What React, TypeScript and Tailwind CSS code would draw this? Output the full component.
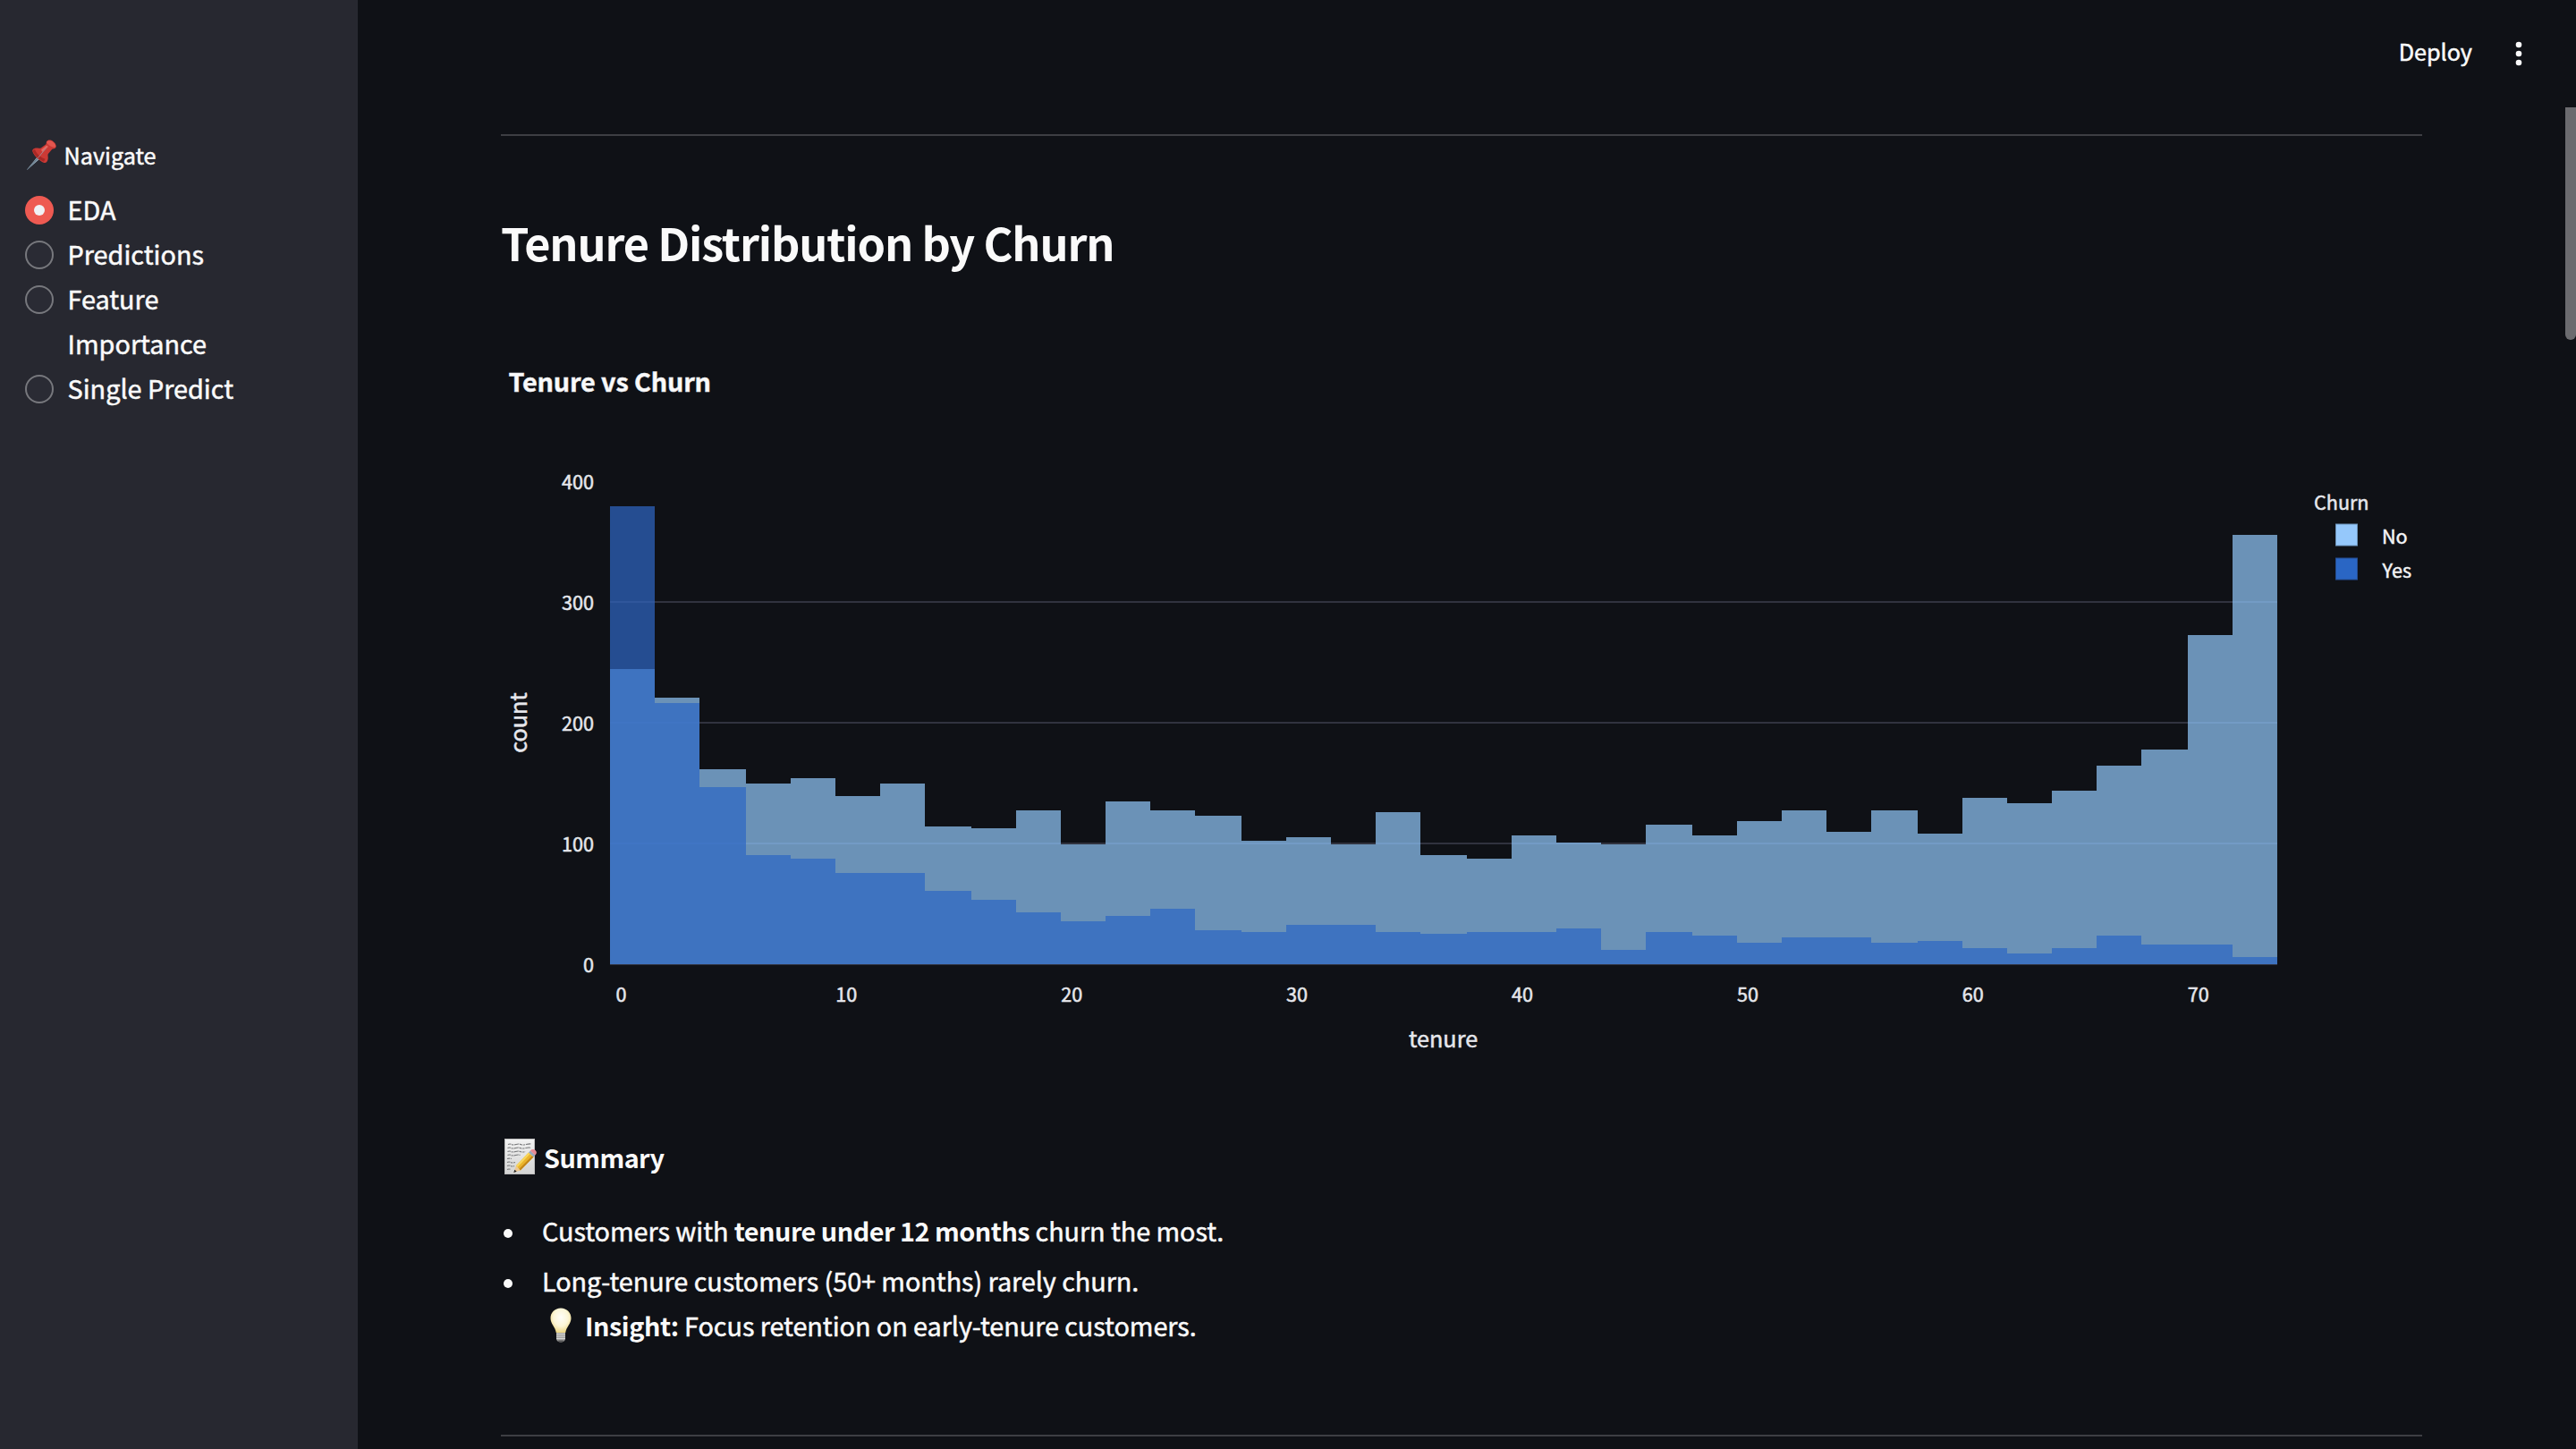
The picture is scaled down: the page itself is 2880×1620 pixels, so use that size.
import React from "react";

const FONT = "font-['Noto_Sans_CJK_SC','Noto_Sans',sans-serif] [-webkit-text-stroke:0.5px_currentColor]";

/* Histogram geometry: pixel tops of every two-month bin, baseline at y = 1078. */
const BASE = 1078;
const LEFT = 682;
const BIN = 25.19;
const NO_TOPS = [
  748, 780, 860, 876, 870, 890, 876, 924, 926, 906, 944, 896, 906, 912, 940, 936, 944, 908, 956,
  960, 934, 942, 944, 922, 934, 918, 906, 930, 906, 932, 892, 898, 884, 856, 838, 710, 598,
];
const YES_TOPS = [
  566, 786, 880, 956, 960, 976, 976, 996, 1006, 1020, 1030, 1024, 1016, 1040, 1042, 1034, 1034,
  1042, 1044, 1042, 1042, 1038, 1062, 1042, 1046, 1054, 1048, 1048, 1054, 1052, 1060, 1066, 1060,
  1046, 1056, 1056, 1070,
];
const edge = (i: number) => LEFT + Math.round(i * BIN) * 2;

function area(tops: number[]) {
  let d = `M${LEFT} ${BASE}`;
  tops.forEach((t, i) => {
    d += `V${t}H${edge(i + 1)}`;
  });
  return d + `V${BASE}Z`;
}

function Chart() {
  return (
    <svg
      className="mt-[75px] block h-[840px] w-[2148px] [&_text]:stroke-[#e6e7ec] [&_text]:[stroke-width:0.5px]"
      viewBox="560 380 2148 840"
      fill="#e6e7ec"
    >
      <defs>
        <clipPath id="no-bars">
          <path d={area(NO_TOPS)} />
        </clipPath>
      </defs>
      <text x="568.500" y="438" fontSize="28.8" fontWeight="700" fill="#fafafa" letterSpacing="-0.15">
        Tenure vs Churn
      </text>
      {[672, 807, 942].map((y) => (
        <rect key={y} x={LEFT} y={y} width="1864" height="2" fill="#31333f" />
      ))}
      <path d={area(YES_TOPS)} fill="#254d91" />
      <rect x={LEFT} y="672" width="50" height="2" fill="#2f569b" />
      <path d={area(NO_TOPS)} fill="#6b92b7" />
      <g clipPath="url(#no-bars)" fill="#739bc5">
        <rect x={LEFT} y="672" width="1864" height="2" />
        <rect x={LEFT} y="807" width="1864" height="2" />
        <rect x={LEFT} y="942" width="1864" height="2" />
      </g>
      <g clipPath="url(#no-bars)">
        <path d={area(YES_TOPS)} fill="#3e73c0" />
      </g>
      <rect x={LEFT} y="807" width="100" height="2" fill="#4075c4" />
      <rect x={LEFT} y="942" width="152" height="2" fill="#4075c4" />
      <rect x={LEFT} y="1078" width="1864" height="1" fill="#31333f" />

      <g fontSize="21.6" textAnchor="end">
        {[400, 300, 200, 100, 0].map((v) => (
          <text key={v} x="664" y={1087 - v * 1.35}>
            {v}
          </text>
        ))}
      </g>
      <g fontSize="21.6" textAnchor="middle">
        {[0, 10, 20, 30, 40, 50, 60, 70].map((v) => (
          <text key={v} x={694.4 + v * 25.19} y="1120">
            {v}
          </text>
        ))}
      </g>
      <text x="1613.5" y="1171" fontSize="25.2" textAnchor="middle">
        tenure
      </text>
      <text transform="translate(588.500 808) rotate(-90)" fontSize="25.2" textAnchor="middle">
        count
      </text>

      <text x="2587" y="570" fontSize="21.6">
        Churn
      </text>
      <rect x="2611.5" y="586" width="24" height="24" fill="#95c8fb" stroke="#6c93ba" />
      <rect x="2611.5" y="624" width="24" height="24" fill="#2a66c4" stroke="#254d91" />
      <g fontSize="21.6" fill="#fafafa">
        <text x="2663" y="608">No</text>
        <text x="2663.500" y="646">Yes</text>
      </g>
    </svg>
  );
}

function Pin() {
  return (
    <svg className="h-[36px] w-[38px] shrink-0" viewBox="0 0 38 36">
      <path d="M2.2 34.4 16 17.5l3 2.8L2.6 34.8z" fill="#9fb6c6" />
      <path d="M2.2 34.4 16.5 18.4l1.2 1L2.6 34.8z" fill="#5f7382" />
      <path
        d="M8.3 14.2c-.6-2.4 2.3-4.3 6-3.7 1.300.2 2.300.4 3.400 0L23.400 6.200c.5-.8.2-1.900.7-2.900 1.300-2.300 4.600-2.200 7.200-.3 3 2.200 4.500 5.700 2.600 7.500-1 .9-2.500.6-3.600 1.200l-4.600 5.600c-.5 1.300.2 3.200 0 5-.3 3.600-2.500 5.400-4.500 4.600C17 25.400 9.500 19 8.300 14.200z"
        fill="#cc3a35"
      />
      <path d="M24 4c1.500-2.500 4.600-2.200 7.200-.3 2.400 1.800 3.600 4.200 2.800 5.800-3 .6-8.500-2-10-5.500z" fill="#e2564f" />
      <path d="M8.600 13.500c1.500 5 8 10.700 12.400 12.200l1.500-3C18 21.500 12.500 17 11 12z" fill="#a82825" />
      <path d="M18 12.500 24 7.500l2 1.500-6.500 6z" fill="#e8685f" />
      <path d="M14.500 21.500 23.500 10.500" stroke="#9b8d9a" strokeWidth=".9" />
    </svg>
  );
}

function Memo() {
  return (
    <svg className="h-[42px] w-[40px] shrink-0" viewBox="0 0 40 42">
      <defs>
        <linearGradient id="paper" x1="0" y1="0" x2="0" y2="1">
          <stop offset="0" stopColor="#f2f2f2" />
          <stop offset="1" stopColor="#d4d4d3" />
        </linearGradient>
      </defs>
      <rect x=".5" y=".5" width="33" height="39" fill="url(#paper)" stroke="#bdbdbd" />
      <g stroke="#77787a" strokeWidth="1.200" strokeDasharray="3.500 .8 2 .7 5 .9" fill="none">
        <path d="M4 6.500q2-1 4 0t5 0 5 0 6 0 6-.5M3.500 10.500q2-1 4 0t5 0 5 0 6 0 6 0M3.500 14.500q2-1 4 0t5 0 5 0 6 0M3.500 18.500q2-1 4 0t5 0 5 0M3 22.500q2-.6 5 0M3 26.500q2-1 4 0t5 0M3 30.500q2-1 4 0t4 0M3 34.500q2-1 4 0" />
      </g>
      <path d="M10.500 37.800 13 30.200l4.800 5.200z" fill="#ecc894" />
      <path d="M10.300 38 11.300 34.800l2.400 2z" fill="#222" />
      <path d="M13 30.200 27 15.500l5.500 5L17.800 35.400z" fill="#eab42c" />
      <path d="M13 30.200 27 15.500l1.700 1.500-14.200 14.900z" fill="#f8d65b" />
      <path d="M16.500 33.800 31 19.200l1.500 1.300L17.800 35.400z" fill="#c2861a" />
      <path d="m27 15.500 1.900-2 5.500 4.900-1.900 2.100z" fill="#9aa9ba" />
      <path d="M28.900 13.500c2-2 4.300-1.800 5.900-.3 1.500 1.400 1.600 3.300-.4 5.200z" fill="#e88a92" />
    </svg>
  );
}

function Bulb() {
  return (
    <svg className="h-[40px] w-[24px] shrink-0" viewBox="0 0 24 40">
      <defs>
        <radialGradient id="glow" cx=".5" cy=".38" r=".6">
          <stop offset="0" stopColor="#fffef8" />
          <stop offset=".6" stopColor="#fcf6d6" />
          <stop offset="1" stopColor="#eed98a" />
        </radialGradient>
      </defs>
      <path
        d="M12 .5C5.300.5.500 5.500.500 11.700c0 6.600 5.400 9.500 6.300 16.300h10.400c.9-6.800 6.300-9.700 6.300-16.300C23.500 5.500 18.700.5 12 .5z"
        fill="url(#glow)"
      />
      <path d="M7 28h10v6.500c0 2.500-2.500 4-5 4s-5-1.500-5-4z" fill="#a5a5a3" />
      <path d="M7 29.500h10M7 32h10M7 34.500h10" stroke="#d5d5d3" strokeWidth="1" />
      <path d="M8.500 36.500h7c-.8 1.500-2 2-3.500 2s-2.800-.5-3.500-2z" fill="#555" />
    </svg>
  );
}

function Radio({ label, on }: { label: React.ReactNode; on?: boolean }) {
  return (
    <div className="flex items-start gap-[15.5px]">
      {on ? (
        <span className="mt-[10px] flex size-8 shrink-0 items-center justify-center rounded-full bg-[#ee5a52]">
          <span className="size-3 rounded-full bg-[#f0f2f6]" />
        </span>
      ) : (
        <span className="mt-[10px] size-8 shrink-0 rounded-full border-2 border-[#77787d] bg-[#2a2b34]" />
      )}
      <span className="text-[28.8px] leading-[50px]">{label}</span>
    </div>
  );
}

export default function App() {
  return (
    <div className={`flex h-[1620px] w-[2880px] overflow-hidden bg-[#0f1116] text-[#fafafa] ${FONT}`}>
      <aside className="h-full w-[400px] shrink-0 bg-[#272830] pt-[149px] pl-7">
        <div className="flex items-center">
          <Pin />
          <span className="ml-[5.5px] text-[25.2px] leading-[48px]">Navigate</span>
        </div>
        <nav className="mt-3">
          <Radio label="EDA" on />
          <Radio label="Predictions" />
          <Radio
            label={
              <>
                Feature
                <br />
                Importance
              </>
            }
          />
          <Radio label="Single Predict" />
        </nav>
      </aside>

      <div className="relative h-full w-[2480px]">
        <header className="flex h-[120px] items-center justify-end pr-[60px] pb-[3px]">
          <span className="pb-[3px] text-[25.2px] leading-[48px]">Deploy</span>
          <svg className="ml-[48px] h-8 w-2" viewBox="0 0 8 32" fill="#fafafa">
            <circle cx="4" cy="7" r="3.300" />
            <circle cx="4" cy="17" r="3.300" />
            <circle cx="4" cy="27" r="3.300" />
          </svg>
        </header>
        <main className="pt-[30px] pr-[172px] pl-[160px]">
          <hr className="h-[2px] border-0 bg-[#3d3e43]" />
          <h2 className="mt-[85px] text-[50.4px] leading-[68px] font-bold tracking-[-1.13px] [-webkit-text-stroke:0px]">
            Tenure Distribution by Churn
          </h2>
          <Chart />
          <div className="mt-[49px] flex h-[50px] items-center pl-1">
            <Memo />
            <h4 className="ml-1 text-[28.8px] leading-[50px] font-bold tracking-[-0.55px] [-webkit-text-stroke:0px]">
              Summary
            </h4>
          </div>
          <ul className="mt-8 text-[28.8px] leading-[50px] tracking-[-0.06px]">
            <li className="flex">
              <span className="mt-[23px] mr-[33px] ml-[3px] size-[10px] shrink-0 rounded-full bg-[#fafafa]" />
              <span>
                Customers with{" "}
                <b className="tracking-[-0.5px] [-webkit-text-stroke:0px]">tenure under 12 months</b> churn the most.
              </span>
            </li>
            <li className="mt-[6px] flex">
              <span className="mt-[23px] mr-[33px] ml-[3px] size-[10px] shrink-0 rounded-full bg-[#fafafa]" />
              <div>
                Long-tenure customers (50+ months) rarely churn.
                <div className="flex items-center">
                  <span className="mr-[15px] ml-[9px]">
                    <Bulb />
                  </span>
                  <span>
                    <b className="tracking-[-0.45px] [-webkit-text-stroke:0px]">Insight:</b> Focus retention on
                    early-tenure customers.
                  </span>
                </div>
              </div>
            </li>
          </ul>
          <hr className="mt-[97px] h-[2px] border-0 bg-[#3d3e43]" />
        </main>
        <div className="absolute top-[120px] right-0 h-[260px] w-3 rounded-b-full bg-[#6b6b6f]" />
      </div>
    </div>
  );
}
